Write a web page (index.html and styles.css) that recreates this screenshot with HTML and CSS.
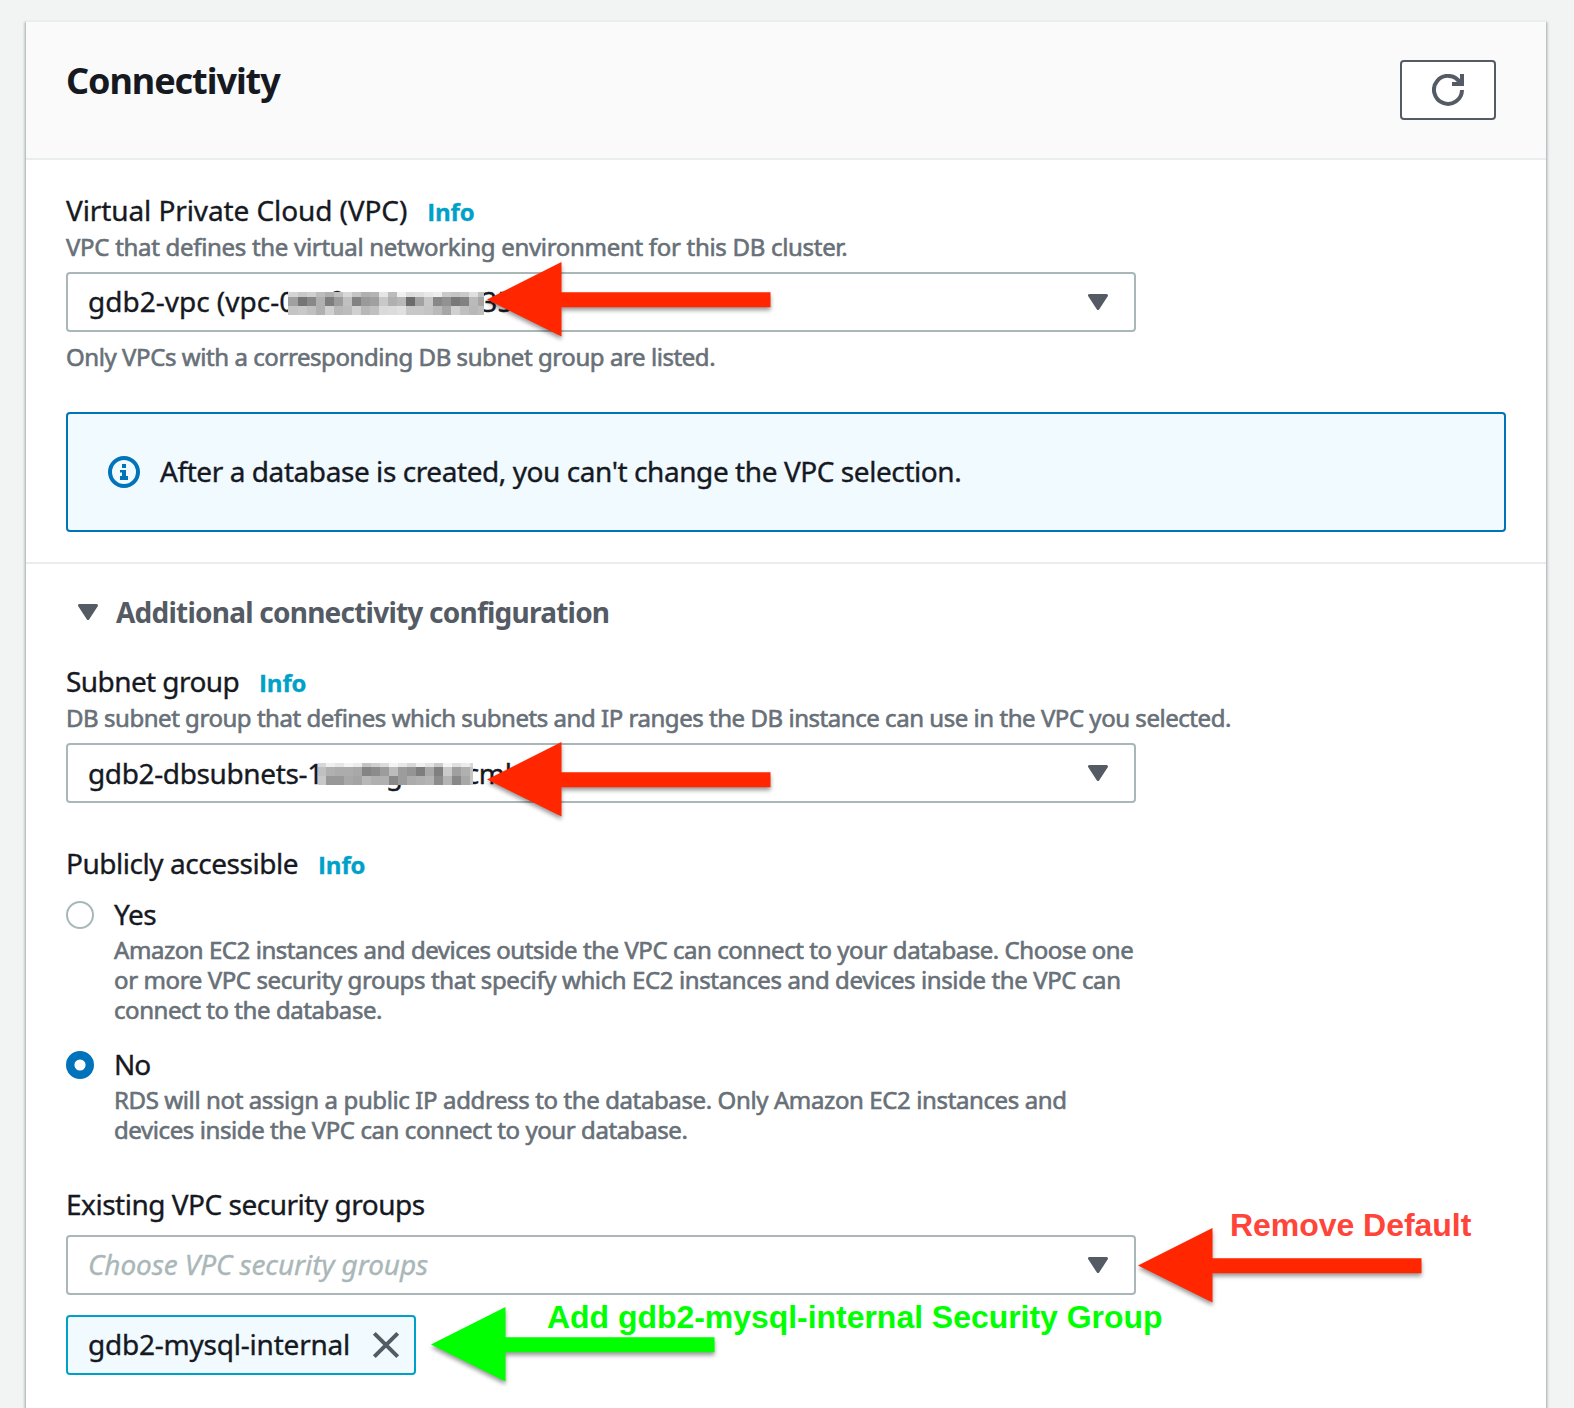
FILE: index.html
```
<!DOCTYPE html>
<html lang="en">
<head>
<meta charset="utf-8">
<title>Connectivity</title>
<link rel="stylesheet" href="styles.css">
</head>
<body>
<main class="panel">
  <header class="panel-header">
    <h2 class="title">Connectivity</h2>
    <button class="refresh" aria-label="Refresh">
      <svg class="icon" viewBox="0 0 16 16"><path d="M10 5h5V0M15 8a7 7 0 1 1-.9-3.5" fill="none" stroke="currentColor" stroke-width="2"/></svg>
    </button>
  </header>

  <section class="section">
    <div class="label"><span class="t-vpc">Virtual Private Cloud (VPC)</span><a class="info">Info</a></div>
    <p class="hint t-hint-vpc">VPC that defines the virtual networking environment for this DB cluster.</p>
    <div class="select">
      <span class="value"><span class="t-vpc-id">gdb2-vpc (vpc-0</span><span class="redacted redacted-vpc"><span class="peek peek-f">f</span><svg class="mosaic" width="196" height="23" shape-rendering="crispEdges" id="m1"></svg></span><span class="t-vpc-tail">35</span></span>
      <svg class="caret" viewBox="0 0 20 16"><path d="M1.5 1.5h17L10 14.5z"/></svg>
    </div>
    <p class="hint constraint t-only">Only VPCs with a corresponding DB subnet group are listed.</p>
    <div class="alert">
      <svg class="icon" viewBox="0 0 16 16"><circle cx="8" cy="8" r="7" fill="none" stroke="currentColor" stroke-width="2"/><path d="M7 4h2v2H7zM6 7h3v3h1v2H6v-2h1V8.3H6z" fill="currentColor"/></svg>
      <span class="t-alert">After a database is created, you can't change the VPC selection.</span>
    </div>
  </section>

  <section class="section section-more">
    <h3 class="expander"><svg class="caret" viewBox="0 0 20 16"><path d="M1.5 1.5h17L10 14.5z"/></svg><span>Additional connectivity configuration</span></h3>

    <div class="label"><span class="t-subnet">Subnet group</span><a class="info">Info</a></div>
    <p class="hint t-hint-subnet">DB subnet group that defines which subnets and IP ranges the DB instance can use in the VPC you selected.</p>
    <div class="select">
      <span class="value value-subnet"><span class="t-subnet-id">gdb2-dbsubnets-1</span><span class="redacted redacted-subnet"><span class="peek peek-g">g</span><svg class="mosaic" width="155" height="22" shape-rendering="crispEdges" id="m2"></svg></span><span class="t-tail">cml</span></span>
      <svg class="caret" viewBox="0 0 20 16"><path d="M1.5 1.5h17L10 14.5z"/></svg>
    </div>

    <div class="label label-public"><span class="t-public">Publicly accessible</span><a class="info">Info</a></div>
    <div class="radio">
      <svg class="dot" viewBox="0 0 28 28"><circle cx="14" cy="14" r="13" fill="#fff" stroke="#aab7b8" stroke-width="2"/></svg>
      <div>
        <div class="option t-yes">Yes</div>
        <p class="hint"><span class="t-y1">Amazon EC2 instances and devices outside the VPC can connect to your database. Choose one</span><br><span class="t-y2">or more VPC security groups that specify which EC2 instances and devices inside the VPC can</span><br><span class="t-y3">connect to the database.</span></p>
      </div>
    </div>
    <div class="radio">
      <svg class="dot" viewBox="0 0 28 28"><circle cx="14" cy="14" r="9.8" fill="#fff" stroke="#0073bb" stroke-width="8.4"/></svg>
      <div>
        <div class="option t-no">No</div>
        <p class="hint"><span class="t-n1">RDS will not assign a public IP address to the database. Only Amazon EC2 instances and</span><br><span class="t-n2">devices inside the VPC can connect to your database.</span></p>
      </div>
    </div>

    <div class="label label-groups"><span class="t-existing">Existing VPC security groups</span></div>
    <div class="select">
      <span class="value placeholder">Choose VPC security groups</span>
      <svg class="caret" viewBox="0 0 20 16"><path d="M1.5 1.5h17L10 14.5z"/></svg>
    </div>
    <div class="token"><span class="t-token">gdb2-mysql-internal</span><svg class="icon close" viewBox="0 0 32 32"><path d="M4.3 4.3l23.4 23.4M27.7 4.3L4.3 27.7" stroke="currentColor" stroke-width="4"/></svg></div>
  </section>
</main>

<svg class="arrow arrow-vpc" viewBox="0 0 284 75"><path d="M0 37.5L74.5 0v30.3H283.5v15H74.5V74.5z"/></svg>
<svg class="arrow arrow-subnet" viewBox="0 0 284 75"><path d="M0 37.5L74.5 0v30.3H283.5v15H74.5V74.5z"/></svg>
<svg class="arrow arrow-remove" viewBox="0 0 284 75"><path d="M0 37.5L74.5 0v30.3H283.5v15H74.5V74.5z"/></svg>
<svg class="arrow arrow-add" viewBox="0 0 284 75"><path d="M0 37.5L74.5 0v30.3H283.5v15H74.5V74.5z"/></svg>
<div class="note note-remove">Remove Default</div>
<div class="note note-add">Add gdb2-mysql-internal Security Group</div>
<script src="mosaic.js"></script>
</body>
</html>
```
FILE: mosaic.js
```
// Grey levels of each redaction block, row by row, in 9px columns.
function mosaic(id, width, firstColumn, rows) {
  const svg = document.getElementById(id);
  let html = '';
  for (const [y, h, levels] of rows) {
    levels.split(' ').forEach((g, i) => {
      const x = i === 0 ? 0 : firstColumn + (i - 1) * 9;
      const w = i === 0 ? firstColumn : Math.min(9, width - x);
      if (w > 0) html += `<rect x="${x}" y="${y}" width="${w}" height="${h}" fill="#${g}${g}${g}"/>`;
    });
  }
  svg.innerHTML = html;
}
mosaic('m1', 196, 10, [
  [0, 5, 'd4 c8 d0 bc b0 c0 d8 c4 b0 b4 e6 bc f0 dc e0 e8 ee ca c4 ca e0 c0'],
  [5, 9, 'a0 75 88 b0 7e 9c c0 82 9a a0 c8 b0 b8 6c a2 c6 88 92 78 82 ba a6'],
  [14, 9, 'c4 c8 c0 b0 d0 b8 bc d0 b8 c0 da dc e0 c8 c8 c4 ba a6 d0 c0 b8 be']
]);
mosaic('m2', 155, 8, [
  [0, 4, 'd8 f0 e6 f4 ec c4 d0 dc f4 e8 d8 f0 e4 ca f4 e0 ec d8'],
  [4, 9, 'c0 b0 ac ac a8 84 8c 9c bc 9c 94 7e a8 80 ca a0 b0 c4'],
  [13, 9, 'c8 98 98 a8 a4 b8 b0 b0 88 9c ac b0 b4 8c b4 88 a8 c4']
]);
```
FILE: styles.css
```
* { box-sizing: border-box; }

body {
  position: relative;
  height: 1408px;
  margin: 0;
  padding: 20px 28px 0 26px;
  overflow: hidden;
  background: #f2f3f3;
  color: #16191f;
  font: 400 28px/36px "Noto Sans", "Open Sans", sans-serif;
  -webkit-text-stroke: .35px currentColor;
  white-space: nowrap;
}

h2, h3, p { margin: 0; }

.panel {
  height: 1420px;
  border-top: 2px solid #eaeded;
  background: #fff;
  box-shadow: 0 2px 2px rgba(0, 28, 36, .3), 2px 2px 2px rgba(0, 28, 36, .15), -2px 2px 2px rgba(0, 28, 36, .15);
}

.panel-header {
  display: flex;
  justify-content: space-between;
  height: 138px;
  padding: 38px 50px 38px 40px;
  border-bottom: 2px solid #eaeded;
  background: #fafafa;
}

.title {
  font-size: 36px;
  line-height: 42px;
  font-weight: 700;
  letter-spacing: -1.06px;
  -webkit-text-stroke: 0;
}

.refresh {
  display: flex;
  align-items: center;
  justify-content: center;
  width: 96px;
  height: 60px;
  padding: 0;
  border: 2px solid #545b64;
  border-radius: 4px;
  background: #fff;
  color: #545b64;
}

.icon { flex: none; width: 32px; height: 32px; }

.section { padding: 32px 40px 30px; }
.section-more { padding-top: 30px; border-top: 2px solid #eaeded; }

.label { display: flex; align-items: baseline; gap: 20px; height: 36px; margin-bottom: 4px; }
.label-public { margin-top: 42px; margin-bottom: 15px; }
.label-groups { margin-top: 41px; margin-bottom: 13px; }

.info {
  color: #00a1c9;
  font: 700 24px/36px "Open Sans", sans-serif;
  letter-spacing: -.2px;
}

.hint {
  color: #687078;
  font-size: 24px;
  line-height: 30px;
  -webkit-text-stroke-width: .6px;
}
.constraint { margin-top: 10px; }

.select {
  display: flex;
  align-items: center;
  justify-content: space-between;
  width: 1070px;
  height: 60px;
  padding: 0 26px 0 20px;
  border: 2px solid #aab7b8;
  border-radius: 4px;
  background: #fff;
}
.hint + .select { margin-top: 10px; }

.value { display: flex; margin-top: -2px; }
.value-subnet { margin-top: 0; }
.placeholder { color: #aab7b8; font-style: italic; letter-spacing: -.1px; }

.caret {
  width: 20px;
  height: 16px;
  fill: #545b64;
  stroke: #545b64;
  stroke-width: 3;
  stroke-linejoin: round;
}

.redacted { position: relative; }
.redacted-vpc { width: 196px; margin-left: -7px; }
.redacted-subnet { width: 155px; margin-left: -5px; }
.mosaic { position: absolute; left: 0; top: 9px; }
.redacted-subnet .mosaic { top: 8px; }
.peek { position: absolute; top: 0; }
.peek-f { left: 41px; }
.peek-g { left: 68px; }

.alert {
  display: flex;
  align-items: center;
  gap: 20px;
  height: 120px;
  margin-top: 40px;
  padding-left: 40px;
  border: 2px solid #0073bb;
  border-radius: 4px;
  background: #f1faff;
}
.alert .icon { color: #0073bb; }

.expander {
  display: flex;
  align-items: center;
  gap: 18px;
  margin-bottom: 33px;
  padding-left: 12px;
  color: #545b64;
  font-size: 28px;
  font-weight: 700;
  letter-spacing: -.77px;
  -webkit-text-stroke: 0;
}

.radio { display: flex; gap: 20px; }
.radio + .radio { margin-top: 21px; }
.dot { flex: none; width: 28px; height: 28px; margin-top: 5px; }
.option { margin-bottom: 3px; }

.token {
  display: flex;
  align-items: center;
  justify-content: space-between;
  width: 350px;
  height: 60px;
  margin-top: 20px;
  padding: 0 12px 0 20px;
  border: 2px solid #00a1c9;
  border-radius: 4px;
  background: #f1faff;
}
.close { color: #545b64; }

/* Tracking per string */
.t-vpc { letter-spacing: -.1px; }
.t-hint-vpc { letter-spacing: -.3px; }
.t-only { letter-spacing: -.43px; }
.t-alert { margin-top: -2px; letter-spacing: -.43px; }
.t-subnet { letter-spacing: -.58px; }
.t-hint-subnet { letter-spacing: -.46px; }
.t-vpc-tail { margin-left: -3px; }
.t-subnet-id { letter-spacing: -.37px; }
.t-tail { margin-left: -7px; letter-spacing: -.4px; }
.t-public { letter-spacing: -.46px; }
.t-yes { letter-spacing: -.5px; }
.t-no { letter-spacing: -1px; }
.t-y1 { letter-spacing: -.45px; }
.t-y2 { letter-spacing: -.39px; }
.t-y3 { letter-spacing: -.43px; }
.t-n1 { letter-spacing: -.385px; }
.t-n2 { letter-spacing: -.41px; }
.t-existing { letter-spacing: -.49px; }
.t-token { margin-top: -2px; letter-spacing: -.22px; }

/* Annotations drawn over the form */
.arrow {
  position: absolute;
  width: 284px;
  height: 75px;
  overflow: visible;
  fill: #ff2600;
  filter: drop-shadow(0 3px 2px rgba(0, 0, 0, .4));
}
.arrow-vpc { left: 487px; top: 261.5px; }
.arrow-subnet { left: 487px; top: 741.5px; }
.arrow-remove { left: 1138px; top: 1227.5px; }
.arrow-add { left: 431px; top: 1306.5px; fill: #00ff00; }

.note {
  position: absolute;
  font: 700 32px/36px "Liberation Sans", Arial, sans-serif;
  letter-spacing: -.04px;
  -webkit-text-stroke: 0;
}
.note-remove { left: 1230px; top: 1207px; color: #ff453a; }
.note-add { left: 547px; top: 1299px; color: #00ff00; }
```
